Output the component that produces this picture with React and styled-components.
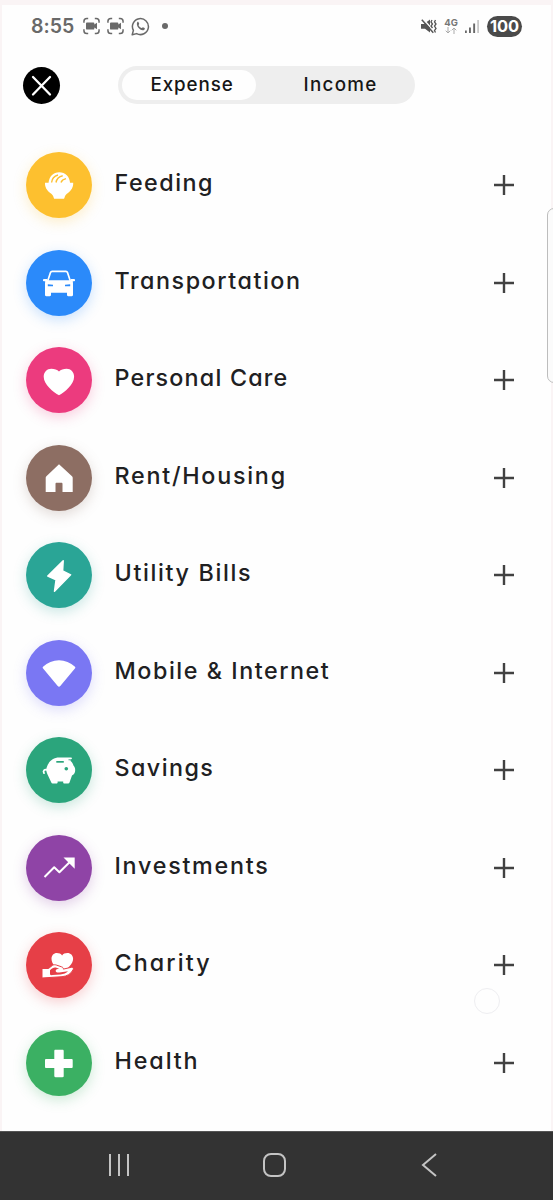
import React from 'react';
import styled, { createGlobalStyle } from 'styled-components';

const GlobalStyle = createGlobalStyle`
  body {
    margin: 0;
    background: #fefefe;
    font-family: Inter, 'Liberation Sans', sans-serif;
    font-feature-settings: 'cv11' 1, 'calt' 0;
  }
`;

const Phone = styled.div`
  position: relative;
  box-sizing: border-box;
  display: flex;
  flex-direction: column;
  width: 553px;
  height: 1200px;
  overflow: hidden;
`;

const Screen = styled.main`
  box-sizing: border-box;
  flex: 1;
  min-height: 0;
  border: solid #faf4f5;
  border-width: 5px 2px 0;
  background: #fefefe;
`;

const StatusBar = styled.header`
  display: flex;
  align-items: center;
  justify-content: space-between;
  height: 42px;
  padding: 0 29px;
`;

const StatusGroup = styled.div`
  display: flex;
  align-items: center;
  gap: ${({ $gap }) => $gap}px;
  svg {
    display: block;
  }
`;

const Clock = styled.span`
  width: 45px;
  color: #696969;
  font-size: 19.5px;
  font-weight: 600;
  white-space: nowrap;
`;

const Dot = styled.span`
  width: 6px;
  height: 6px;
  margin-left: 5px;
  border-radius: 50%;
  background: #696969;
`;

const Network = styled.div`
  display: flex;
  flex-direction: column;
  align-items: center;
  width: 14px;
  color: #777;
  font-size: 9.5px;
  font-weight: 700;
  line-height: 9px;
`;

const Battery = styled.span`
  width: 35px;
  height: 21px;
  border-radius: 11px;
  background: #4a4a4a;
  color: #fff;
  font-size: 16.5px;
  font-weight: 700;
  letter-spacing: -0.2px;
  line-height: 21px;
  text-align: center;
`;

const TopBar = styled.div`
  display: flex;
  align-items: center;
  height: 38px;
  padding: 19px 0 0 21px;
`;

const CloseButton = styled.button`
  display: flex;
  width: 37px;
  height: 37px;
  padding: 0;
  border: 0;
  border-radius: 50%;
  background: #000;
`;

const Toggle = styled.div`
  box-sizing: border-box;
  display: flex;
  width: 297px;
  height: 38px;
  margin-left: 58px;
  padding: 4px;
  border-radius: 19px;
  background: #eeeeee;
`;

const ToggleItem = styled.button`
  width: ${({ $width }) => $width}px;
  padding: 0 0 1px ${({ $indent }) => $indent}px;
  border: 0;
  border-radius: 16px;
  background: ${({ $active }) => ($active ? '#fefefe' : 'transparent')};
  color: #161616;
  font: inherit;
  font-size: 18.8px;
  font-weight: 500;
  letter-spacing: ${({ $spacing }) => $spacing}px;
  line-height: 27px;
  text-align: left;
  white-space: nowrap;
`;

const List = styled.ul`
  margin: 0;
  padding: 32.5px 37px 0 24px;
  list-style: none;
`;

const Row = styled.li`
  display: flex;
  align-items: center;
  height: 97.5px;
`;

const Badge = styled.div`
  width: 66px;
  height: 66px;
  border-radius: 50%;
  background: ${({ $color }) => $color};
  box-shadow: 0 4px 13px ${({ $color }) => $color}40;
  color: ${({ $color }) => $color};
`;

const Label = styled.span`
  flex: 1;
  padding: 0 0 4px 22.5px;
  color: #202022;
  font-size: 23.3px;
  font-weight: 500;
  letter-spacing: ${({ $spacing }) => $spacing}px;
  line-height: 28px;
  white-space: nowrap;
`;

const ScrollHandle = styled.div`
  position: absolute;
  top: 208px;
  right: -10px;
  box-sizing: border-box;
  width: 16px;
  height: 175px;
  border: 1.5px solid #bdbdbd;
  border-radius: 7px;
  background: #fbfbfb;
`;

const TouchMark = styled.div`
  position: absolute;
  top: 988px;
  left: 474px;
  box-sizing: border-box;
  width: 26px;
  height: 26px;
  border: 1px solid #eeeef1;
  border-radius: 50%;
`;

const NavBar = styled.nav`
  display: flex;
  align-items: center;
  justify-content: space-between;
  box-sizing: border-box;
  height: 69px;
  padding: 0 114px 2px 105px;
  border-top: 1px solid #555;
  background: #333333;
`;

const ScreenRecordIcon = () => (
  <svg width="17" height="18" viewBox="0 0 18 18" fill="none" stroke="#696969" strokeWidth="1.6">
    <path d="M1 5.500V4a3 3 0 0 1 3-3h1.500M12.500 1H14a3 3 0 0 1 3 3v1.500M17 12.500V14a3 3 0 0 1-3 3h-1.500M5.500 17H4a3 3 0 0 1-3-3v-1.500" />
    <path d="M4.200 5.200h6.800a1 1 0 0 1 1 1v1.300l2.800-1.900v6.800L12 10.500v1.300a1 1 0 0 1-1 1H4.200a1 1 0 0 1-1-1V6.200a1 1 0 0 1 1-1z" fill="#696969" stroke="none" />
  </svg>
);

const WhatsAppIcon = () => (
  <svg width="19" height="19" viewBox="0 0 19 19" fill="none">
    <path d="M1.200 17.800l1.200-4.400a8 8 0 1 1 3.200 3.200z" stroke="#696969" strokeWidth="1.500" strokeLinejoin="round" />
    <path d="M6.300 5.100c.5-.5 1-.4 1.200.1l.7 1.600c.1.400-.6 1.100-.6 1.400.6 1.300 1.600 2.200 2.900 2.800.5.100 1-.9 1.400-.8l1.700.8c.5.300.2 1.400-.5 1.900-2.900 2-8.900-3.600-6.800-7.800z" fill="#696969" />
  </svg>
);

const MuteIcon = () => (
  <svg width="17" height="17" viewBox="0 0 17 17" fill="none" stroke="#555">
    <path d="M1 6h3l6-4.500v13L5 10.800H1z" fill="#555" stroke="none" />
    <path d="M3 1l11.500 12.500" stroke="#fefefe" strokeWidth="1.500" />
    <path d="M1.800 1.800l11.500 13" strokeWidth="1.500" />
    <path d="M12 2l-1 2 1.500 2L11 8l1.500 2M15.500 2l-1 2 1.500 2-1.500 2 1.500 2.500-1.500 2 1 2" strokeWidth="1.300" />
  </svg>
);

const DataArrows = () => (
  <svg width="12" height="7" viewBox="0 0 12 7" fill="none" stroke="#aaa">
    <path d="M3 0v6M.7 3.700L3 6l2.300-2.300M9 7V1M6.700 3.300L9 1l2.300 2.300" />
  </svg>
);

const SignalIcon = () => (
  <svg width="15" height="15" viewBox="0 0 15 15">
    <path d="M0 11.500h1.800V14H0zM4 8.500h1.900V14H4zM8.200 4.500h1.900V14H8.200z" fill="#686868" />
    <path d="M12.200 1H14v13h-1.800z" fill="#c9c9c9" />
  </svg>
);

const CloseIcon = () => (
  <svg width="37" height="37" viewBox="0 0 37 37" stroke="#fff" strokeWidth="2.300" strokeLinecap="round">
    <path d="M10 10l17 17.500M27 10L10 27.500" />
  </svg>
);

const PlusIcon = () => (
  <svg width="20" height="20" viewBox="0 0 20 20" stroke="#414141" strokeWidth="2.400">
    <path d="M10 0v20M0 10h20" />
  </svg>
);

// Glyphs share the 66px grid of the badge; currentColor cuts details out.
const glyphs = {
  bowl: (
    <>
      <path d="M19 30.800h28.200c.2 4.500-2 7.800-5.200 10.200-1.600 1.200-2.800 2-3.300 3.900l-.3 1c-.2.600-.5.800-1.100.8h-8.400c-.6 0-.9-.2-1.100-.8l-.3-1c-.5-1.900-1.700-2.700-3.300-3.900-3.200-2.400-5.400-5.700-5.200-10.200z" />
      <path d="M22.600 31C22.800 24.800 27.300 20.300 33.300 20.300S43.700 24.800 44 31z" />
      <path d="M25.600 30.500c.3-3.600 2.700-6.500 6.400-7.500M30 30.500c.6-3.200 3-5.900 6.700-6.700M35 30.500c.7-2.100 2.300-3.300 5-3.900" fill="none" stroke="currentColor" strokeWidth="1.400" />
    </>
  ),
  car: (
    <>
      <path d="M21.700 31l2.800-8.400c.3-.9.800-1.300 1.600-1.300h13.800c.8 0 1.300.4 1.600 1.300l2.800 8.400" fill="none" stroke="#fff" strokeWidth="1.700" />
      <path d="M17 29.800c0-.5.400-.8 1-.8h3.500l-.5 1.200h24l-.5-1.200H48c.6 0 1 .3 1 .8v.7c0 .5-.3.700-.8.700h-1.400l.2 2.300v11.600c0 .7-.5 1.200-1.200 1.200h-3.600c-.7 0-1.200-.5-1.200-1.200V42.800H25v2.300c0 .7-.5 1.200-1.200 1.200h-3.600c-.7 0-1.200-.5-1.200-1.200V33.500l.2-2.300h-1.400c-.5 0-.8-.2-.8-.7z" />
      <path d="M21.800 34.300l5.200.4v1.600h-5.200zM44.200 34.300l-5.200.4v1.600h5.200z" fill="currentColor" />
    </>
  ),
  heart: <path d="M33 48.300C27.500 45 17.700 37.800 17.700 29.700c0-4.700 3.300-8 7.600-8 3.200 0 6 .8 7.700 2.800 1.700-2 4.500-2.800 7.600-2.800 4.300 0 7.500 3.300 7.500 8C48.100 37.800 38.500 45 33 48.300z" />,
  house: <path d="M33 19.300L46 31.200c.5.500.7.900.7 1.500V47H36.500v-8.200c0-.7-.4-1.100-1.100-1.100h-4.800c-.7 0-1.100.4-1.100 1.100V47H19.700V32.700c0-.6.200-1 .7-1.500z" />,
  bolt: <path d="M37.200 18.700L21.800 34l8.300 3.700-1.600 11.600L44.600 32.800l-8-3.900z" stroke="#fff" strokeWidth="1.500" strokeLinejoin="round" />,
  wifi: <path d="M17 26.800c4.600-4.200 10-6.500 16-6.500s11.400 2.300 16 6.500c.5.500.5.900.1 1.400L34.300 46c-.8 1.100-1.800 1.100-2.600 0L16.900 28.200c-.4-.5-.4-.9.100-1.400z" />,
  piggy: (
    <>
      <path d="M20.500 31c1.800-6.300 6.200-10.500 12.700-10.500h11.500c1.300 0 1.500.8.900 1.600l-1.200 1.700c1.600 1.300 2.600 2.900 3.200 4.900.9.900 1.600 2.300 1.600 4.200 0 2.500-.8 4.500-3.200 5.600l-2.500 7c-.2.700-.7 1.100-1.400 1.100h-3.600c-.8 0-1.300-.4-1.300-1.100v-1.100h-5.600v1.100c0 .7-.5 1.100-1.300 1.100h-3.600c-.7 0-1.200-.4-1.400-1.100l-4-8.500c-1-2.200-1.300-4-.8-6z" />
      <path d="M21 32.800c-2.700-.6-4.300.8-3 3.300" fill="none" stroke="#fff" strokeWidth="1.800" strokeLinecap="round" />
      <path d="M30.300 24h7.500v1.700h-7.500z" fill="currentColor" />
      <circle cx="40.300" cy="31.800" r="1.800" fill="currentColor" />
      <path d="M42.500 22.800h4" stroke="currentColor" strokeWidth=".9" />
    </>
  ),
  trend: (
    <>
      <path d="M18.500 42l9.700-9.800 5.200 5L44.800 26" fill="none" stroke="#fff" strokeWidth="2" strokeLinejoin="round" />
      <path d="M37.500 22.600h11.200v11.200z" />
    </>
  ),
  charity: (
    <>
      <path d="M36 40.500c-5.200-3.800-10.500-8.200-10.500-13.700 0-3.300 2.300-5.700 5.300-5.700 2.300 0 4.200.8 5.300 2.300 1.100-1.500 3-2.300 5.300-2.300 3.100 0 5.700 2.400 5.700 5.700 0 5.500-5.900 9.900-11.100 13.700z" />
      <path d="M16 36.500h6.500l4-3.200c1.300-.7 2.600-.7 4-.2l5 1.700c1.400.5 2 1.300 1.900 2.300l7.800-1.800c1.700-.3 2.700.8 1.900 2.400-2.100 4.300-6 6.500-11.100 7L16 46z" stroke="currentColor" strokeWidth="1" />
      <path d="M24 38.300c2.300-2.300 4.200-3.200 6.500-2.500l2.700.9c-2.600.2-3.700 1-3.500 2.200.2 1.300 1.700 1.700 3.700 1.500l8.600-1.100c-1.800 1.900-4.300 2.900-7.500 3.200l-8 .6c-1 .1-1.900-.1-2.500-.5z" fill="currentColor" />
    </>
  ),
  cross: <path d="M29.500 19.700h7c.8 0 1.200.4 1.200 1.200V29h7.800c.8 0 1.200.4 1.200 1.200v6.600c0 .8-.4 1.200-1.200 1.200h-7.800v8.100c0 .8-.4 1.200-1.200 1.200h-7c-.8 0-1.200-.4-1.200-1.200V38h-8.100c-.8 0-1.200-.4-1.200-1.200v-6.600c0-.8.400-1.200 1.200-1.200h8.100v-8.100c0-.8.400-1.200 1.200-1.200z" />,
};

const categories = [
  { name: 'Feeding', glyph: 'bowl', color: '#fdc02f', spacing: 1.5 },
  { name: 'Transportation', glyph: 'car', color: '#2b8afa', spacing: 1.55 },
  { name: 'Personal Care', glyph: 'heart', color: '#ec3b7e', spacing: 1.2 },
  { name: 'Rent/Housing', glyph: 'house', color: '#8d6e63', spacing: 1.75 },
  { name: 'Utility Bills', glyph: 'bolt', color: '#2aa596', spacing: 1.65 },
  { name: 'Mobile & Internet', glyph: 'wifi', color: '#7a77f3', spacing: 1.55 },
  { name: 'Savings', glyph: 'piggy', color: '#2ba57c', spacing: 1.45 },
  { name: 'Investments', glyph: 'trend', color: '#8f44a6', spacing: 1.75 },
  { name: 'Charity', glyph: 'charity', color: '#e63f47', spacing: 2.1 },
  { name: 'Health', glyph: 'cross', color: '#3bb063', spacing: 1.9 },
];

const Category = ({ name, glyph, color, spacing }) => (
  <Row>
    <Badge $color={color}>
      <svg width="66" height="66" viewBox="0 0 66 66" fill="#fff">
        {glyphs[glyph]}
      </svg>
    </Badge>
    <Label $spacing={spacing}>{name}</Label>
    <PlusIcon />
  </Row>
);

export default () => (
  <>
    <GlobalStyle />
    <Phone>
      <Screen>
        <StatusBar>
          <StatusGroup $gap={7}>
            <Clock>8:55</Clock>
            <ScreenRecordIcon />
            <ScreenRecordIcon />
            <WhatsAppIcon />
            <Dot />
          </StatusGroup>
          <StatusGroup $gap={7}>
            <MuteIcon />
            <Network>
              4G
              <DataArrows />
            </Network>
            <SignalIcon />
            <Battery>100</Battery>
          </StatusGroup>
        </StatusBar>
        <TopBar>
          <CloseButton>
            <CloseIcon />
          </CloseButton>
          <Toggle>
            <ToggleItem $active $width={134} $indent={28.5} $spacing={0.9}>Expense</ToggleItem>
            <ToggleItem $width={155} $indent={47.5} $spacing={1.3}>Income</ToggleItem>
          </Toggle>
        </TopBar>
        <List>
          {categories.map((category) => (
            <Category key={category.name} {...category} />
          ))}
        </List>
      </Screen>
      <NavBar>
        <svg width="28" height="26" viewBox="0 0 28 26" stroke="#c4c4c4" strokeWidth="2">
          <path d="M5 2v22M14 2v22M23 2v22" />
        </svg>
        <svg width="26" height="26" viewBox="0 0 26 26" fill="none" stroke="#c4c4c4" strokeWidth="2">
          <rect x="1" y="2" width="21" height="22" rx="7" />
        </svg>
        <svg width="20" height="26" viewBox="0 0 20 26" fill="none" stroke="#c4c4c4" strokeWidth="2">
          <path d="M17 2L4 13l13 11" />
        </svg>
      </NavBar>
      <ScrollHandle />
      <TouchMark />
    </Phone>
  </>
);
